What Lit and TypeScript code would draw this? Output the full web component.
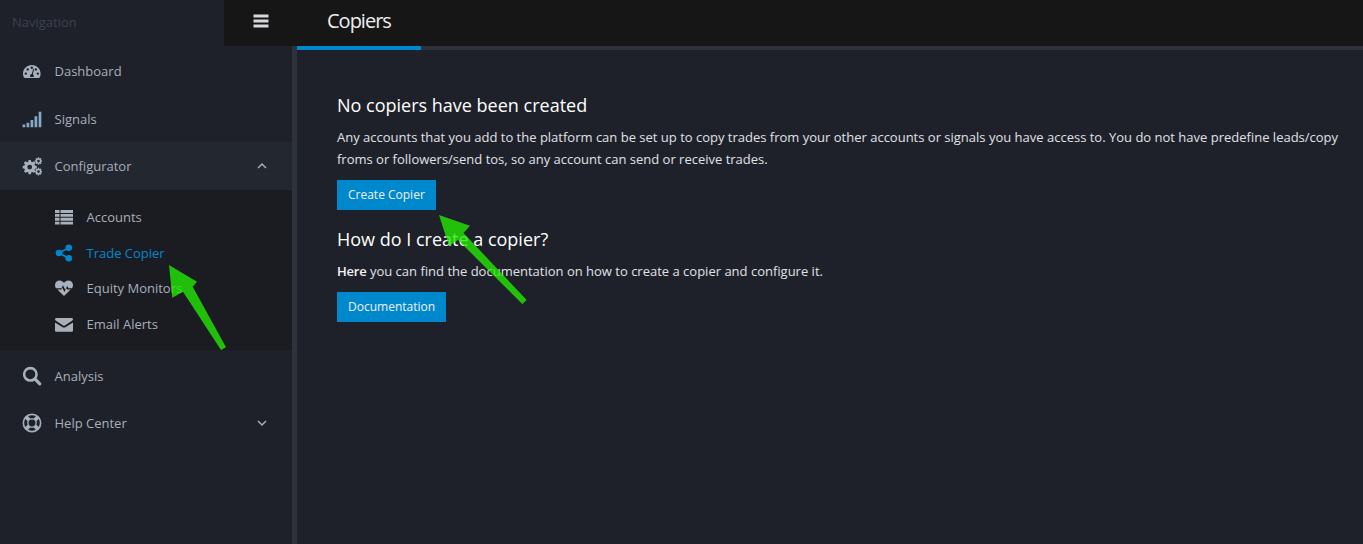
import { LitElement, html, css, svg } from "lit";
import { customElement } from "lit/decorators.js";

function gear(cx: number, cy: number, r: number, teeth: number, hole: number) {
  const pts: string[] = [];
  const rIn = r * 0.76;
  for (let i = 0; i < teeth; i++) {
    const a = (i / teeth) * Math.PI * 2;
    const w = (Math.PI / teeth) * 0.55;
    const seq: [number, number][] = [
      [rIn, a - w * 1.35],
      [r, a - w * 0.7],
      [r, a + w * 0.7],
      [rIn, a + w * 1.35],
    ];
    for (const [rr, t] of seq) pts.push(`${(cx + rr * Math.cos(t)).toFixed(2)} ${(cy + rr * Math.sin(t)).toFixed(2)}`);
  }
  const outer = "M" + pts.join("L") + "Z";
  const h = `M${cx - hole} ${cy}a${hole} ${hole} 0 1 0 ${hole * 2} 0a${hole} ${hole} 0 1 0 ${-hole * 2} 0Z`;
  return outer + h;
}

const icons: Record<string, unknown> = {
  dashboard: svg`<path transform="translate(.72 1.08) scale(.9)" fill-rule="evenodd" d="M9 2.800C4.200 2.800.2 6.700.2 11.500c0 1.400.3 2.600.9 3.800.2.300.5.500.8.500h14.200c.3 0 .6-.2.8-.5.6-1.200.9-2.400.9-3.800 0-4.800-4-8.700-8.800-8.700zM9 4.300a1.200 1.200 0 1 1 0 2.400 1.200 1.200 0 0 1 0-2.400zM4.900 6a1.200 1.200 0 1 1 0 2.400 1.200 1.200 0 0 1 0-2.400zM13.100 6a1.200 1.200 0 1 1 0 2.400 1.200 1.200 0 0 1 0-2.400zM3 10.200a1.200 1.200 0 1 1 0 2.400 1.200 1.200 0 0 1 0-2.400zM15 10.200a1.200 1.200 0 1 1 0 2.400 1.200 1.200 0 0 1 0-2.400zM10.400 6.500l.9.300-1.200 5.200c.6.400.9 1 .9 1.600 0 .4-.1.800-.3 1.100H7.500c-.2-.3-.3-.7-.3-1.100 0-1 .8-1.800 1.800-1.900z"/>`,
  signal: svg`<path d="M.5 14h2.400v2.400H.5zM4.100 12.300h2.400v4.100H4.100zM7.700 9.800h2.400v6.600H7.700zM11.300 6.500h2.400v9.900h-2.400zM15 2.400h2.400v14H15z"/>`,
  cogs: svg`<g transform="translate(.3 0) scale(.95)"><path fill-rule="evenodd" d="${gear(7, 10.500, 6.800, 8, 2.300)}"/><path fill-rule="evenodd" d="${gear(15.300, 4.800, 3.600, 8, 1.300)}"/><path fill-rule="evenodd" d="${gear(15.300, 14.800, 3.600, 8, 1.300)}"/></g>`,
  list: svg`<path d="M0 2h4.500v2.900H0zM5.500 2H18v2.900H5.500zM0 5.900h4.500v2.900H0zM5.500 5.900H18v2.900H5.500zM0 9.800h4.500v2.900H0zM5.500 9.800H18v2.900H5.500zM0 13.700h4.500v2.900H0zM5.500 13.700H18v2.900H5.500z"/>`,
  share: svg`<circle cx="4" cy="9" r="3.300"/><circle cx="13.800" cy="3.700" r="3.300"/><circle cx="13.800" cy="14.300" r="3.300"/><path d="M4 9l9.800-5.300M4 9l9.800 5.300" stroke="currentColor" stroke-width="1.800" fill="none"/>`,
  heart: svg`<path d="M9 17L2.300 10.600h4l1-1.900 2.100 4.200 2-3.600.8 1.300h3.500zM.9 9.300C.3 8.300 0 7.300 0 6.200 0 3.400 2 1.500 4.700 1.500c1.800 0 3.300 1 4.300 2.300 1-1.300 2.500-2.300 4.300-2.300C16 1.500 18 3.400 18 6.200c0 1.100-.3 2.100-.9 3.100h-3.500l-1.400-2.300-2 3.700-2.200-4.500-1.500 3.100z"/>`,
  mail: svg`<path d="M1.300 2.300h15.400c.7 0 1.300.6 1.300 1.300 0 .6-.4 1.200-.9 1.500L9.800 9.800c-.5.300-1.100.3-1.600 0L.9 5.100C.4 4.800 0 4.200 0 3.600c0-.7.600-1.300 1.300-1.300zM0 6.800l7.600 4.700c.9.500 1.900.5 2.800 0L18 6.800v8c0 .7-.6 1.300-1.300 1.300H1.300C.6 16.100 0 15.500 0 14.800z" transform="translate(0 .7)"/>`,
  search: svg`<circle cx="7.500" cy="7.500" r="5.600" fill="none" stroke="currentColor" stroke-width="2.300"/><path d="M11.600 11.600l4.400 4.400" stroke="currentColor" stroke-width="2.800" stroke-linecap="round" fill="none"/>`,
  help: svg`<path fill-rule="evenodd" d="M9 .5a8.500 8.500 0 1 1 0 17 8.500 8.500 0 0 1 0-17zM9 2c-1.300 0-2.500.3-3.500 1l2 2c.5-.2 1-.3 1.500-.3s1 .1 1.500.3l2-2C11.500 2.300 10.300 2 9 2zM3 5.500C2.300 6.500 2 7.700 2 9s.3 2.500 1 3.500l2-2c-.2-.5-.3-1-.3-1.500s.1-1 .3-1.500zM15 5.500l-2 2c.2.500.3 1 .3 1.500s-.1 1-.3 1.500l2 2c.7-1 1-2.200 1-3.500s-.3-2.500-1-3.500zM9 5.900a3.100 3.100 0 1 0 0 6.200 3.100 3.100 0 0 0 0-6.200zM7.500 13c.5.200 1 .3 1.500.3s1-.1 1.500-.3l2 2c-1 .7-2.200 1-3.500 1s-2.500-.3-3.500-1z"/>`,
};

function icon(name: string, cls = "") {
  return html`<svg class="ic ${cls}" viewBox="0 0 18 18" fill="currentColor" aria-hidden="true">${icons[name]}</svg>`;
}

@customElement("app-root")
export class AppRoot extends LitElement {
  static styles = css`
    :host {
      display: block;
      position: relative;
      width: 1363px;
      height: 544px;
      overflow: hidden;
      background: #1e212a;
      font-family: "Open Sans", sans-serif;
      font-size: 13px;
      color: #e6e8ec;
    }
    .shell { display: flex; height: 544px; }
    .side { width: 292px; flex: none; display: flex; flex-direction: column; background: #1e212a; }
    .split { width: 5px; flex: none; background: #2e323b; margin-top: 46px; }
    .navlabel { height: 47px; display: flex; align-items: center; padding: 0 0 4px 12px; box-sizing: border-box; color: #3c4250; font-size: 13px; }
    .item { height: 47.500px; box-sizing: border-box; display: flex; align-items: center; padding-left: 22px; color: #a8afb9; flex: none; }
    .item.low { padding-top: 1px; }
    .item .ic { width: 20px; height: 20px; margin-right: 12.500px; color: #a8b0bb; }
    .item .ic.sig { color: #86a9c8; }
    .item .chev { width: 12px; height: 12px; margin-left: auto; margin-right: 24px; color: #a8afb9; }
    .open { background: #23272f; }
    .sub { background: #1a1c22; padding: 10px 0 8px; margin-bottom: 2px; }
    .subitem { height: 35.600px; display: flex; align-items: center; padding-left: 55px; color: #a8afb9; }
    .subitem .ic { width: 18px; height: 18px; margin-right: 13.500px; color: #a8b0bb; }
    .subitem.on, .subitem.on .ic { color: #0088cc; }
    .main { flex: 1; min-width: 0; display: flex; flex-direction: column; }
    .topbar { height: 46px; flex: none; margin-left: -73px; display: flex; align-items: center; background: #161616; }
    .burger { width: 16px; height: 16px; margin: -5px 0 0 29px; color: #d6d8dc; }
    .title { margin-left: 58px; font-size: 20px; letter-spacing: -1px; color: #eeeeee; font-weight: 400; margin-top: -6px; }
    .tabs { height: 4px; flex: none; background: #2e323b; }
    .tab { width: 124px; height: 4px; background: #0088cc; }
    .content { padding: 42px 20px 0 40px; }
    h2 { margin: 0; font-size: 18px; font-weight: 400; line-height: 26px; color: #ffffff; }
    p { margin: 0; line-height: 22px; color: #e0e2e6; }
    .lead { margin-top: 8px; }
    .btn { display: inline-block; margin: 0; padding: 0 11px 2px; height: 30px; border: 0; background: #0088cc; color: #f0f2f4; font: inherit; font-size: 12px; }
    .b1 { margin-top: 10px; display: block; }
    .h2b { margin-top: 16px; }
    .docp { margin-top: 8px; }
    .docp b { font-weight: 600; color: #f4f4f4; letter-spacing: -0.2px; }
    .b2 { margin-top: 10px; display: block; }
    .arrows { position: absolute; left: 0; top: 0; width: 1363px; height: 544px; pointer-events: none; }
    .arrows path { fill: #23e804; fill-opacity: 0.8; }
  `;

  render() {
    const chev = (d: string) => html`<svg class="chev" viewBox="0 0 12 12" fill="none" stroke="currentColor" stroke-width="1.500" aria-hidden="true"><path d="${d}"/></svg>`;
    return html`
      <div class="shell">
        <nav class="side">
          <div class="navlabel">Navigation</div>
          <div class="item">${icon("dashboard")}Dashboard</div>
          <div class="item low">${icon("signal", "sig")}Signals</div>
          <div class="item open">${icon("cogs")}Configurator${chev("M2 8l4-4 4 4")}</div>
          <div class="sub">
            <div class="subitem">${icon("list")}Accounts</div>
            <div class="subitem on">${icon("share")}Trade Copier</div>
            <div class="subitem">${icon("heart")}Equity Monitors</div>
            <div class="subitem">${icon("mail")}Email Alerts</div>
          </div>
          <div class="item">${icon("search")}Analysis</div>
          <div class="item">${icon("help")}Help Center${chev("M2 4l4 4 4-4")}</div>
        </nav>
        <div class="split"></div>
        <div class="main">
          <header class="topbar">
            <svg class="burger" viewBox="0 0 16 16" fill="currentColor" aria-hidden="true"><path d="M.500 1.500h15v3h-15zM.500 6.500h15v3h-15zM.500 11.500h15v3h-15z"/></svg>
            <div class="title">Copiers</div>
          </header>
          <div class="tabs"><div class="tab"></div></div>
          <section class="content">
            <h2>No copiers have been created</h2>
            <p class="lead">Any accounts that you add to the platform can be set up to copy trades from your other accounts or signals you have access to. You do not have predefine leads/copy froms or followers/send tos, so any account can send or receive trades.</p>
            <div class="b1"><button class="btn">Create Copier</button></div>
            <h2 class="h2b">How do I create a copier?</h2>
            <p class="docp"><b>Here</b> you can find the documentation on how to create a copier and configure it.</p>
            <div class="b2"><button class="btn">Documentation</button></div>
          </section>
        </div>
      </div>
      <svg class="arrows" viewBox="0 0 1363 544" aria-hidden="true">
        <path d="M169 265L197 281.700 192.700 286.700 226 347.300 221 350 183 291.700 172.300 297.700Z"/>
        <path d="M439 215L470 225.700 463.500 233 526.700 300 522.300 304 458 240 449 246Z"/>
      </svg>
    `;
  }
}
